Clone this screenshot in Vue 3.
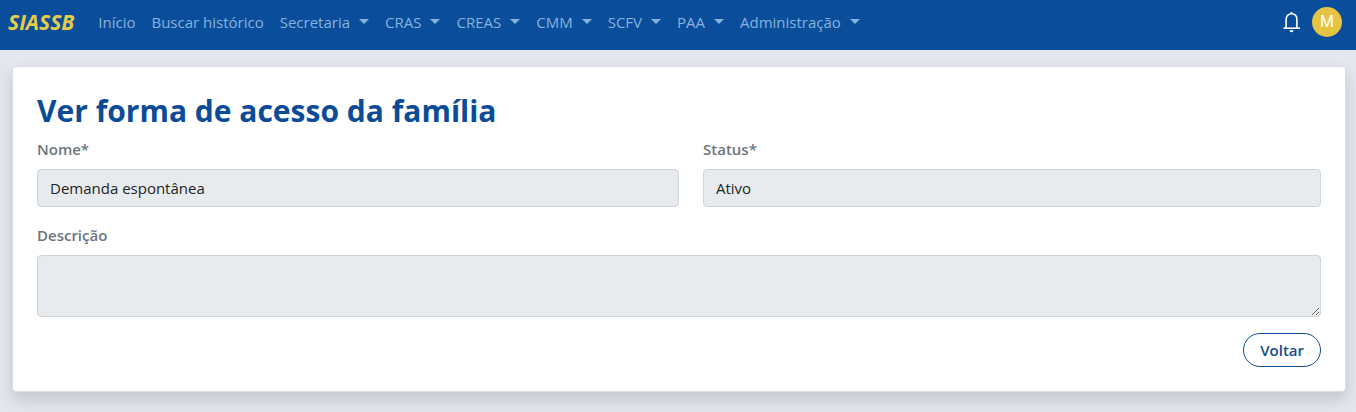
<script setup>
import { ref } from 'vue'

const links = [
  { label: 'Início' },
  { label: 'Buscar histórico' },
  { label: 'Secretaria', menu: true },
  { label: 'CRAS', menu: true },
  { label: 'CREAS', menu: true },
  { label: 'CMM', menu: true },
  { label: 'SCFV', menu: true },
  { label: 'PAA', menu: true },
  { label: 'Administração', menu: true },
]

const nome = ref('Demanda espontânea')
const status = ref('Ativo')
const descricao = ref('')
</script>

<template>
  <div class="page">
    <header class="navbar">
      <a class="brand" href="#">SIASSB</a>
      <nav class="links">
        <a v-for="link in links" :key="link.label" class="link" :class="{ menu: link.menu }" href="#">{{ link.label }}</a>
      </nav>
      <div class="tools">
        <button class="bell" type="button" aria-label="Notificações">
          <svg width="18" height="22" viewBox="0 0 18 22" fill="none" stroke="currentColor" stroke-width="1.6">
            <path d="M0.5 17.2H17" />
            <path d="M3.1 17V8.6C3.1 5 5.3 2.8 8.5 2.8S13.9 5 13.9 8.6V17" />
            <path d="M7 2.6A1.5 1.6 0 0 1 10 2.6Z" fill="currentColor" stroke="none" />
            <path d="M6.5 19.2H10.5A2 2 0 0 1 6.5 19.2Z" fill="currentColor" stroke="none" />
          </svg>
        </button>
        <button class="avatar" type="button">M</button>
      </div>
    </header>

    <main class="content">
      <form class="card" @submit.prevent>
        <h1 class="title">Ver forma de acesso da família</h1>
        <div class="row">
          <div class="field">
            <label for="nome">Nome*</label>
            <input id="nome" v-model="nome" class="control" type="text" disabled />
          </div>
          <div class="field">
            <label for="status">Status*</label>
            <input id="status" v-model="status" class="control" type="text" disabled />
          </div>
        </div>
        <div class="field">
          <label for="descricao">Descrição</label>
          <textarea id="descricao" v-model="descricao" class="control area" rows="2" disabled></textarea>
        </div>
        <div class="actions">
          <button class="back" type="button">Voltar</button>
        </div>
      </form>
    </main>
  </div>
</template>

<style>
body {
  margin: 0;
  background: #e4e8ee;
}
</style>

<style scoped>
.page,
.page * {
  box-sizing: border-box;
}

.page {
  min-height: 100vh;
  font-family: "Open Sans", "Noto Sans", sans-serif;
  font-size: 15px;
  line-height: 24px;
  color: #212529;
}

.navbar {
  display: flex;
  align-items: center;
  height: 50px;
  padding: 0 14px 6px 8px;
  background: #0a4e9b;
}

.brand {
  margin-right: 16px;
  color: #e5cb4c;
  font-size: 21px;
  font-weight: 700;
  font-style: italic;
  text-decoration: none;
}

.links {
  display: flex;
}

.link {
  padding: 0 8px;
  color: #86b1dd;
  text-decoration: none;
  white-space: nowrap;
}

.menu::after {
  content: "";
  display: inline-block;
  margin-left: 9px;
  vertical-align: 4px;
  border-top: 5px solid;
  border-right: 5px solid transparent;
  border-left: 5px solid transparent;
}

.tools {
  display: flex;
  align-items: center;
  gap: 11px;
  margin-left: auto;
}

.bell {
  display: flex;
  padding: 0;
  border: 0;
  background: none;
  color: #fff;
}

.avatar {
  width: 30px;
  height: 30px;
  padding: 0;
  border: 0;
  border-radius: 50%;
  background: #e6c443;
  color: #fff;
  font: 400 16px/30px Roboto, sans-serif;
}

.content {
  padding: 16px 10px 20px 12px;
}

.card {
  padding: 24px;
  border: 1px solid #dadde1;
  border-radius: 4px;
  background: #fff;
  box-shadow: 0 8px 16px rgba(0, 0, 0, 0.15);
}

.title {
  margin: 0 0 6px;
  color: #0c4c96;
  font-size: 30px;
  line-height: 40px;
  font-weight: 700;
}

.row {
  display: grid;
  grid-template-columns: 642fr 618fr;
  gap: 24px;
  margin-bottom: 16px;
}

.field {
  display: flex;
  flex-direction: column;
  gap: 8px;
}

label {
  color: #6d757d;
  font-weight: 600;
}

.control {
  width: 100%;
  height: 38px;
  padding: 6px 12px;
  border: 1px solid #ced4da;
  border-radius: 4px;
  background: #e7ebee;
  color: #212529;
  font: inherit;
}

.area {
  display: block;
  height: 62px;
  resize: vertical;
}

.actions {
  display: flex;
  justify-content: flex-end;
  margin-top: 16px;
}

.back {
  height: 34px;
  padding: 0 16px;
  border: 1px solid #0c4c96;
  border-radius: 17px;
  background: #fff;
  color: #174b88;
  font: inherit;
  font-weight: 600;
}
</style>
